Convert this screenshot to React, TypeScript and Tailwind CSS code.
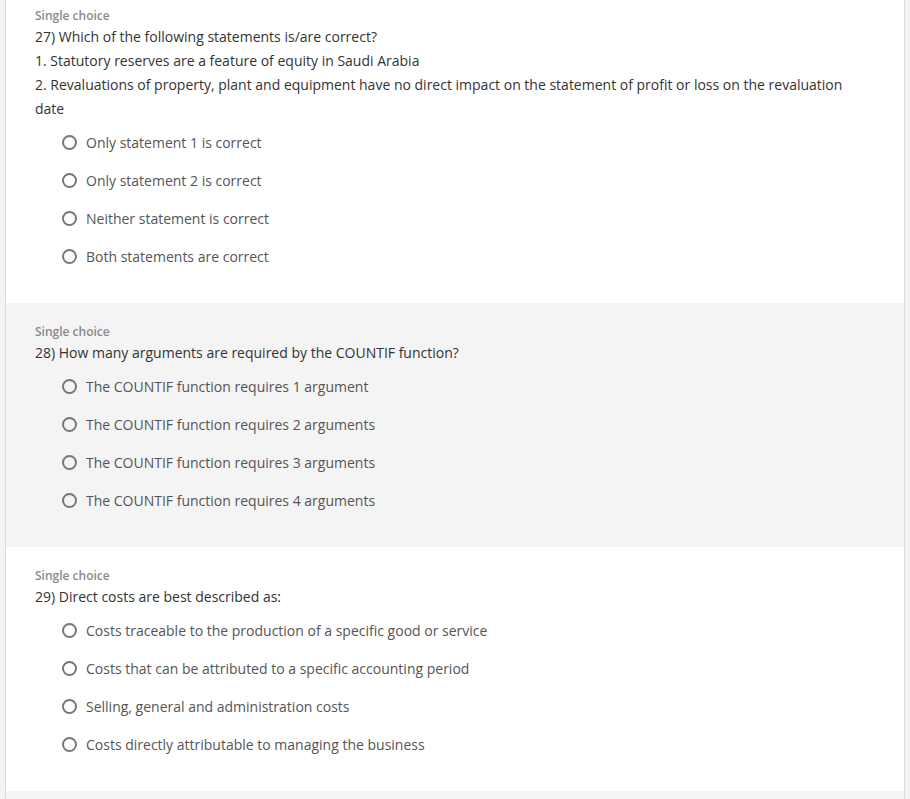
import React from "react";

interface Question {
  number: number;
  lines: string[];
  options: string[];
}

const questions: Question[] = [
  {
    number: 27,
    lines: [
      "27) Which of the following statements is/are correct?",
      "1. Statutory reserves are a feature of equity in Saudi Arabia",
      "2. Revaluations of property, plant and equipment have no direct impact on the statement of profit or loss on the revaluation date",
    ],
    options: [
      "Only statement 1 is correct",
      "Only statement 2 is correct",
      "Neither statement is correct",
      "Both statements are correct",
    ],
  },
  {
    number: 28,
    lines: ["28) How many arguments are required by the COUNTIF function?"],
    options: [
      "The COUNTIF function requires 1 argument",
      "The COUNTIF function requires 2 arguments",
      "The COUNTIF function requires 3 arguments",
      "The COUNTIF function requires 4 arguments",
    ],
  },
  {
    number: 29,
    lines: ["29) Direct costs are best described as:"],
    options: [
      "Costs traceable to the production of a specific good or service",
      "Costs that can be attributed to a specific accounting period",
      "Selling, general and administration costs",
      "Costs directly attributable to managing the business",
    ],
  },
];

function Radio() {
  return (
    <span className="block h-[15px] w-[15px] shrink-0 rounded-full border-2 border-[#777]" />
  );
}

function QuestionBlock({ q, index }: { q: Question; index: number }) {
  return (
    <div
      className={
        (index % 2 === 1 ? "bg-[#f4f4f4] " : "bg-white ") +
        (index === 0 ? "pt-[7px] " : "pt-[20px] ") +
        "pb-[28px] pl-[29px] pr-[35px]"
      }
    >
      {/* Header */}
      <div className="text-[12px] font-semibold leading-[18px] text-[#8a8a8a]">
        Single choice
      </div>
      <div className="text-[14px] leading-6 text-[#333]">
        {q.lines.map((l) => (
          <p key={l}>{l}</p>
        ))}
      </div>

      {/* Options */}
      <div className="mt-[2px] pl-[27px]">
        {q.options.map((o) => (
          <label
            key={o}
            className="flex h-[38px] items-center gap-[9px] text-[14px] text-[#555]"
          >
            <Radio />
            <span>{o}</span>
          </label>
        ))}
      </div>
    </div>
  );
}

export default function App() {
  return (
    <div
      className="min-h-[799px] bg-[#f3f3f3] px-[5px]"
      style={{ fontFamily: "'Open Sans', 'Liberation Sans', sans-serif" }}
    >
      <div className="min-h-[799px] border-x border-[#dadada] bg-[#f4f4f4]">
        {questions.map((q, i) => (
          <QuestionBlock key={q.number} q={q} index={i} />
        ))}
      </div>
    </div>
  );
}
